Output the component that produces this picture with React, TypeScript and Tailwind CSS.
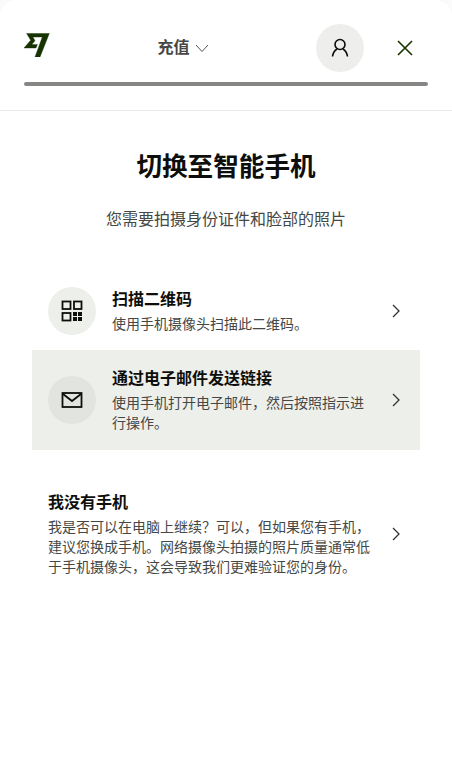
import React from "react";

const font = "font-['Liberation_Sans','Noto_Sans_CJK_SC',sans-serif]";

function Chevron() {
  return (
    <svg width="8" height="14" viewBox="0 0 8 14" fill="none" stroke="#333" strokeWidth="1.3" className="shrink-0">
      <path d="M1 1l6 6-6 6" />
    </svg>
  );
}

function Row({ title, desc, icon, active, circle, py }: { title: string; desc: string; icon?: React.ReactNode; active?: boolean; circle?: string; py: string }) {
  return (
    <div className={`flex items-center px-4 ${py} ${active ? "bg-[#edefeb]" : ""}`}>
      {icon && (
        <div className={`w-12 h-12 rounded-full flex items-center justify-center shrink-0 mr-4 ${circle}`}>{icon}</div>
      )}
      <div className="flex-1 min-w-0 pr-4">
        <div className="text-[16px] leading-[24px] mb-[2px] font-bold text-[#0e0f0c]">{title}</div>
        <div className="text-[14px] leading-[20px] text-[#454745]">{desc}</div>
      </div>
      <div className="w-4 flex justify-center shrink-0"><Chevron /></div>
    </div>
  );
}

export default function App() {
  return (
    <div className="w-[452px] h-[757px] bg-[#fafafa]">
      <div className={`w-full h-full bg-white rounded-t-[16px] overflow-hidden ${font}`}>
        <header className="border-b border-[#e8e8e6] h-[111px] px-6 pt-6">
          <div className="flex items-center h-12">
            <svg width="26" height="24" viewBox="0 0 26 24" className="shrink-0 mb-[6px]">
              <path fill="#163300" stroke="#163300" strokeWidth="0.4" d="M6.7 7.2 0 15h12l1.4-3.4H7.8l3.2-3.8v-.1L8.9 4h9.4l-7.3 20h5L25.3.5H2.6l4.1 6.7Z" />
            </svg>
            <div className="flex-1 flex items-center justify-center">
              <span className="text-[16px] font-bold text-[#454745]">充值</span>
              <svg width="14" height="9" viewBox="0 0 14 9" fill="none" stroke="#555" strokeWidth="1" className="ml-[5px]">
                <path d="M1 1l6 6.5L13 1" />
              </svg>
            </div>
            <div className="w-12 h-12 rounded-full bg-[#eeeeec] flex items-center justify-center mr-[33px]">
              <svg width="18" height="20" viewBox="0 0 18 20" fill="none" stroke="#0e0f0c" strokeWidth="1.6">
                <circle cx="9" cy="6.5" r="5" />
                <path d="M1.5 18.5c0.5-3.5 2-6 4.5-7.5M16.5 18.5c-0.5-3.5-2-6-4.5-7.5" />
              </svg>
            </div>
            <svg width="16" height="16" viewBox="0 0 16 16" fill="none" stroke="#163300" strokeWidth="1.6" className="mr-[15px]">
              <path d="M1 1l14 14M15 1 1 15" />
            </svg>
          </div>
          <div className="h-1 mt-[10px] rounded-full bg-[#868685]" />
        </header>

        <h1 className="text-center text-[25.6px] leading-[32px] font-bold text-[#0e0f0c] mt-[40px]">切换至智能手机</h1>
        <p className="text-center text-[16px] leading-[24px] text-[#454745] mt-[25px]">您需要拍摄身份证件和脸部的照片</p>

        <div className="mx-8 mt-[40px]">
          <Row
            py="py-[15px]"
            title="扫描二维码"
            desc="使用手机摄像头扫描此二维码。"
            circle="bg-[#edefeb]"
            icon={
              <svg width="22" height="22" viewBox="0 0 22 22" fill="none" stroke="#0e0f0c" strokeWidth="1.8">
                <rect x="1.5" y="1.5" width="8" height="7.5" />
                <rect x="13" y="1.5" width="7.5" height="7.5" />
                <rect x="1.5" y="13" width="8" height="7.5" />
                <path stroke="none" fill="#0e0f0c" d="M12 12h4v4h-4zM17 12h4v4h-4zM12 17h4v4h-4zM17 17h4v4h-4z" />
              </svg>
            }
          />
          <Row
            py="py-[17px]"
            active
            title="通过电子邮件发送链接"
            desc="使用手机打开电子邮件，然后按照指示进行操作。"
            circle="bg-[#e2e4e0]"
            icon={
              <svg width="22" height="18" viewBox="0 0 22 18" fill="none" stroke="#0e0f0c" strokeWidth="1.8">
                <rect x="1.5" y="2" width="19" height="14" />
                <path d="M2 3l9 7 9-7" />
              </svg>
            }
          />
          <Row
            py="pt-[41px]"
            title="我没有手机"
            desc="我是否可以在电脑上继续？可以，但如果您有手机，建议您换成手机。网络摄像头拍摄的照片质量通常低于手机摄像头，这会导致我们更难验证您的身份。"
          />
        </div>
      </div>
    </div>
  );
}
